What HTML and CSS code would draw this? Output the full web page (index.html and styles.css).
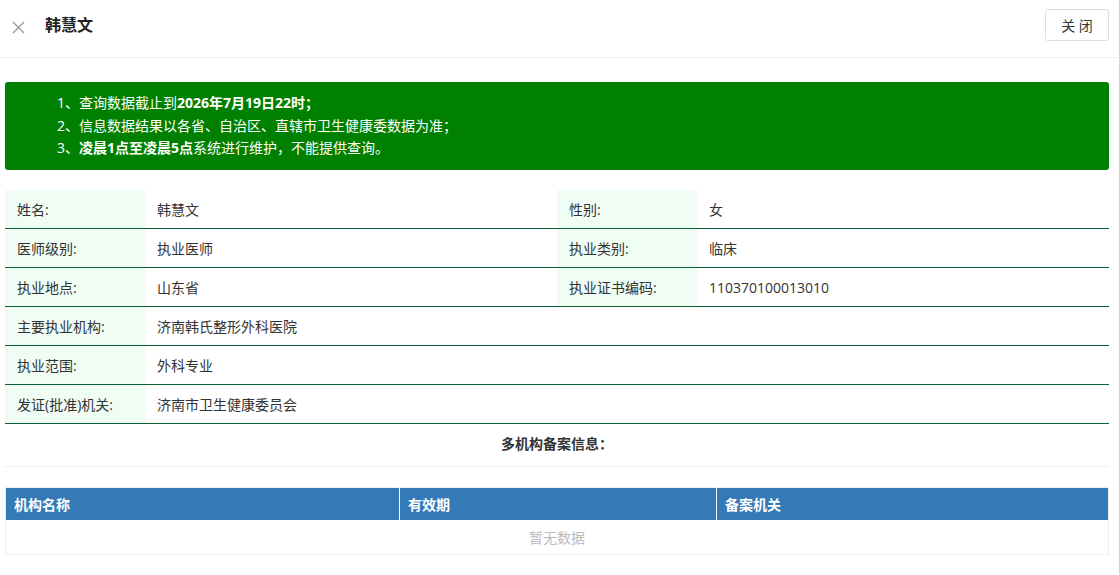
FILE: index.html
```html
<!DOCTYPE html>
<html>
<head>
	<meta charset="UTF-8">
	<title>韩慧文</title>
	<link rel="stylesheet" href="styles.css">
</head>
<body>
	<div class="head">
		<span class="close-x">
			<svg width="13" height="13" viewBox="0 0 13 13"><path d="M1 1L12 12M12 1L1 12" stroke="#999" stroke-width="1.3" fill="none"/></svg>
		</span>
		<span class="head-title">韩慧文</span>
		<button class="btn-close">关 闭</button>
	</div>

	<div class="content">
		<div class="notice">
			<div>1、查询数据截止到<b>2026年7月19日22时；</b></div>
			<div>2、信息数据结果以各省、自治区、直辖市卫生健康委数据为准；</div>
			<div>3、<b>凌晨1点至凌晨5点</b>系统进行维护，不能提供查询。</div>
		</div>

		<table class="info">
			<tr>
				<td class="lbl">姓名:</td><td class="val">韩慧文</td>
				<td class="lbl">性别:</td><td class="val">女</td>
			</tr>
			<tr>
				<td class="lbl">医师级别:</td><td class="val">执业医师</td>
				<td class="lbl">执业类别:</td><td class="val">临床</td>
			</tr>
			<tr>
				<td class="lbl">执业地点:</td><td class="val">山东省</td>
				<td class="lbl">执业证书编码:</td><td class="val">110370100013010</td>
			</tr>
			<tr>
				<td class="lbl">主要执业机构:</td><td class="val" colspan="3">济南韩氏整形外科医院</td>
			</tr>
			<tr>
				<td class="lbl">执业范围:</td><td class="val" colspan="3">外科专业</td>
			</tr>
			<tr>
				<td class="lbl">发证(批准)机关:</td><td class="val" colspan="3">济南市卫生健康委员会</td>
			</tr>
		</table>

		<div class="sub-title">多机构备案信息：</div>

		<table class="multi">
			<tr>
				<th class="c1">机构名称</th><th class="c2">有效期</th><th class="c3">备案机关</th>
			</tr>
			<tr>
				<td colspan="3" class="empty">暂无数据</td>
			</tr>
		</table>
	</div>
</body>
</html>
```

FILE: styles.css
```css
body {
	margin : 0;
	font-family : "Open Sans", "Noto Sans CJK SC", sans-serif;
	font-size : 14px;
	color : #333;
	background : #fff;
}
.head {
	height : 57px;
	border-bottom : 1px solid #eee;
	display : flex;
	align-items : center;
	padding : 0 10px 0 12px;
}
.close-x {
	width : 13px;
	height : 13px;
	display : flex;
	margin-top : -3px;
}
.head-title {
	margin-left : 20px;
	font-size : 16px;
	font-weight : bold;
	color : #222;
	flex : 1;
	margin-top : -9px;
}
.btn-close {
	width : 64px;
	height : 32px;
	border : 1px solid #ddd;
	border-radius : 3px;
	background : #fff;
	font-family : "Open Sans", "Noto Sans CJK SC", sans-serif;
	font-size : 14px;
	color : #333;
	margin-top : -8px;
	padding : 0;
}
.content {
	padding : 24px 10px 0 5px;
}
.notice {
	background : #008000;
	color : #fff;
	border-radius : 3px;
	padding : 10px 0 10px 52px;
	font-size : 14px;
	line-height : 22.5px;
}
.notice b {
	font-weight : bold;
}
table {
	border-collapse : collapse;
	width : 100%;
}
.info {
	margin-top : 20px;
}
.info td {
	height : 39px;
	border-bottom : 1px solid #0b6334;
	padding : 0 12px;
	box-sizing : border-box;
}
.info .lbl {
	width : 140px;
	background : #effdf5;
}
.info td:nth-child(2) {
	width : 412px;
}
.sub-title {
	text-align : center;
	font-weight : bold;
	height : 42px;
	line-height : 40px;
	border-bottom : 1px solid #eee;
	margin-bottom : 20px;
}
.multi {
	border : 1px solid #eee;
}
.multi th {
	background : #337ab7;
	color : #fff;
	text-align : left;
	height : 32px;
	padding : 0 8px;
	border-left : 1px solid #fff;
	font-weight : bold;
}
.multi th.c1 {
	border-left : none;
	width : 377px;
}
.multi th.c2 {
	width : 300px;
}
.empty {
	height : 32px;
	text-align : center;
	color : #bbb;
}
```
